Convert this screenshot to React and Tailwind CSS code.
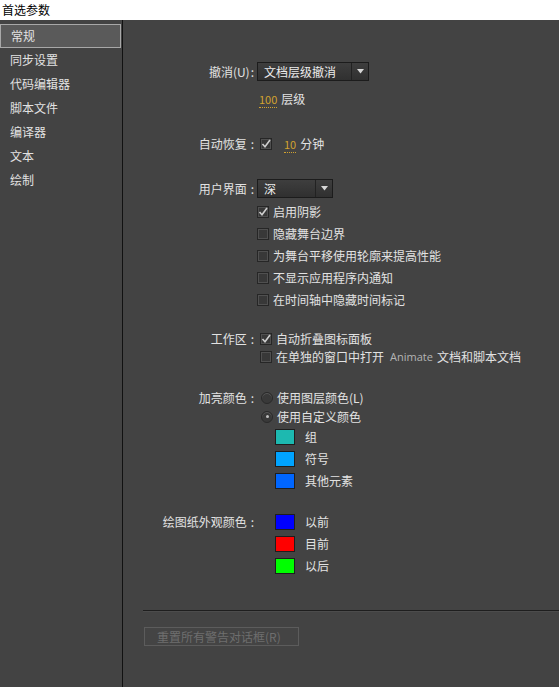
import React from "react";

const font = { fontFamily: '"Noto Sans CJK SC", "Noto Sans", sans-serif' };

const Check = ({ checked }) => (
  <span className="w-[12px] h-[12px] shrink-0 border border-[#262626] bg-[#383838] shadow-[inset_0_0_0_1px_#505050] flex items-center justify-center">
    {checked && (
      <svg width="10" height="10" viewBox="0 0 10 10">
        <path d="M1.5 5 L4 7.8 L9 1" fill="none" stroke="#cfcfcf" strokeWidth="1.6" />
      </svg>
    )}
  </span>
);

const Radio = ({ checked }) => (
  <span className="w-[12px] h-[12px] shrink-0 rounded-full border border-[#2a2a2a] bg-[#393939] shadow-[inset_0_1px_0_#5a5a5a] flex items-center justify-center">
    {checked && <span className="w-[3px] h-[3px] rounded-full bg-[#c0c0c0]" />}
  </span>
);

const Select = ({ value, width }) => (
  <div
    className="h-[19px] flex border border-[#1c1c1c] bg-gradient-to-b from-[#3e3e3e] to-[#303030] text-[#ececec]"
    style={{ width }}
  >
    <div className="flex-1 flex items-center pl-[6px] text-[12px]">{value}</div>
    <div className="w-[17px] border-l border-[#222] flex items-center justify-center">
      <svg width="7" height="5" viewBox="0 0 7 5">
        <path d="M0 0 H7 L3.5 4.5 Z" fill="#d8d8d8" />
      </svg>
    </div>
  </div>
);

// label text with the loose colon the dialog uses
const Label = ({ text, tight }) =>
  text ? (
    <>
      {text}
      <span className={tight ? "ml-px" : "ml-[4px]"}>:</span>
    </>
  ) : null;

const Row = ({ label, tight, h = "h-[18px]", children }) => (
  <div className={`flex items-center ${h}`}>
    <div className="w-[114px] text-right pr-[3px] whitespace-nowrap">
      <Label text={label} tight={tight} />
    </div>
    <div className="flex items-center">{children}</div>
  </div>
);

const Swatch = ({ color }) => (
  <span className="w-[20px] h-[16px] border border-[#1e1e1e]" style={{ background: color }} />
);

const Num = ({ children }) => (
  <span className="text-[#d2a22f] text-[11px] border-b border-dotted border-[#d2a22f] leading-[13px]">{children}</span>
);

const sidebar = ["常规", "同步设置", "代码编辑器", "脚本文件", "编译器", "文本", "绘制"];

export default function App() {
  return (
    <div className="w-[559px] h-[687px] flex flex-col bg-[#434343] text-[12px] text-[#e2e2e2] overflow-hidden" style={font}>
      <div className="h-[20px] bg-white text-black text-[12px] pl-[2px] flex items-center">首选参数</div>
      <div className="flex flex-1">
        <div className="w-[123px] border-r border-[#111] pt-[4px]">
          {sidebar.map((s, i) => (
            <div
              key={s}
              className={`h-[24px] flex items-center pl-[10px] mr-[1px] ${
                i === 0 ? "bg-[#5a5a5a] border border-[#a8a8a8]" : ""
              }`}
            >
              {s}
            </div>
          ))}
        </div>
        <div className="flex-1 pl-[20px] pt-[42px] flex flex-col">
          <Row label="撤消(U)" tight h="h-[19px]">
            <Select value="文档层级撤消" width="112px" />
          </Row>
          <div className="mt-[9px]">
            <Row label="">
              <span className="ml-[2px]"><Num>100</Num></span>
              <span className="ml-[4px]">层级</span>
            </Row>
          </div>
          <div className="mt-[27px]">
            <Row label="自动恢复">
              <span className="ml-[3px]"><Check checked /></span>
              <span className="ml-[12px]"><Num>10</Num></span>
              <span className="ml-[4px]">分钟</span>
            </Row>
          </div>
          <div className="mt-[26px]">
            <Row label="用户界面" h="h-[19px]">
              <Select value="深" width="76px" />
            </Row>
          </div>
          <div className="mt-[3px] flex flex-col pl-[114px]">
            {[
              ["启用阴影", true],
              ["隐藏舞台边界", false],
              ["为舞台平移使用轮廓来提高性能", false],
              ["不显示应用程序内通知", false],
              ["在时间轴中隐藏时间标记", false],
            ].map(([t, c]) => (
              <div key={t} className="h-[22px] flex items-center gap-[4px]">
                <Check checked={c} />
                <span>{t}</span>
              </div>
            ))}
          </div>
          <div className="mt-[19px]">
            <Row label="工作区">
              <span className="ml-[3px]"><Check checked /></span>
              <span className="ml-[4px]">自动折叠图标面板</span>
            </Row>
            <Row label="">
              <span className="ml-[3px]"><Check /></span>
              <span className="ml-[4px]">在单独的窗口中打开</span>
              <span className="ml-[6px] text-[11px] text-[#b4b4b4]" style={{ fontFamily: '"Open Sans", sans-serif' }}>Animate</span>
              <span className="ml-[4px]">文档和脚本文档</span>
            </Row>
          </div>
          <div className="mt-[22px]">
            <Row label="加亮颜色" h="h-[19px]">
              <span className="ml-[4px]"><Radio /></span>
              <span className="ml-[4px]">使用图层颜色(L)</span>
            </Row>
            <Row label="" h="h-[19px]">
              <span className="ml-[4px]"><Radio checked /></span>
              <span className="ml-[4px]">使用自定义颜色</span>
            </Row>
            <div className="pl-[132px]">
              {[
                ["#1db9b0", "组"],
                ["#00a3ff", "符号"],
                ["#0066ff", "其他元素"],
              ].map(([c, t]) => (
                <div key={t} className="h-[22px] flex items-center gap-[10px]">
                  <Swatch color={c} />
                  <span>{t}</span>
                </div>
              ))}
            </div>
          </div>
          <div className="mt-[19px] flex">
            <div className="w-[114px] text-right pr-[3px] h-[22px] flex items-center justify-end whitespace-nowrap">
              <Label text="绘图纸外观颜色" />
            </div>
            <div className="pl-[18px]">
              {[
                ["#0000ff", "以前"],
                ["#ff0000", "目前"],
                ["#00ff00", "以后"],
              ].map(([c, t]) => (
                <div key={t} className="h-[22px] flex items-center gap-[10px]">
                  <Swatch color={c} />
                  <span>{t}</span>
                </div>
              ))}
            </div>
          </div>
          <div className="mt-[33px] h-px bg-[#1e1e1e] border-b border-[#4c4c4c] box-content" />
          <div className="mt-[15px] w-[155px] h-[19px] border border-[#5c5c5c] bg-[#444] text-[#6e6e6e] flex items-center pl-[12px] ml-px">
            重置所有警告对话框(R)
          </div>
        </div>
      </div>
    </div>
  );
}
